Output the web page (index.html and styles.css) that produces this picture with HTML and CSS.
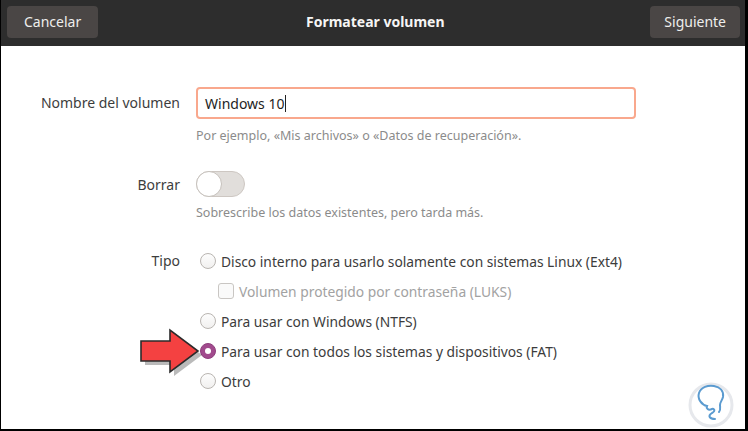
FILE: index.html
```html
<!DOCTYPE html>
<html lang="es">
<head>
<meta charset="utf-8">
<title>Formatear volumen</title>
<link rel="stylesheet" href="styles.css">
</head>
<body>
<div class="frame">
  <header class="headerbar">
    <button class="hbtn">Cancelar</button>
    <div class="title">Formatear volumen</div>
    <button class="hbtn next">Siguiente</button>
  </header>
  <main class="content">
    <div class="form">
      <div class="label l-name">Nombre del volumen</div>
      <div class="field">
        <div class="entry"><span>Windows 10</span><span class="caret"></span></div>
        <div class="hint hint-name">Por ejemplo, «Mis archivos» o «Datos de recuperación».</div>
      </div>

      <div class="label l-erase">Borrar</div>
      <div class="field field-erase">
        <div class="switch"><span class="knob"></span></div>
        <div class="hint hint-erase">Sobrescribe los datos existentes, pero tarda más.</div>
      </div>

      <div class="label l-type">Tipo</div>
      <div class="field field-type">
        <div class="opt"><span class="radio"></span><span>Disco interno para usarlo solamente con sistemas Linux (Ext4)</span></div>
        <div class="opt sub disabled"><span class="check"></span><span>Volumen protegido por contraseña (LUKS)</span></div>
        <div class="opt"><span class="radio"></span><span>Para usar con Windows (NTFS)</span></div>
        <div class="opt selected-row">
          <svg class="arrow" width="66" height="48" viewBox="0 0 66 48">
            <path d="M5 15 H34 V4 L62 25 L34 46 V35 H5 Z" fill="#3a3a3a" opacity="0.35" transform="translate(2,2)"/>
            <path d="M3 13 H32 V2 L60 23 L32 44 V33 H3 Z" fill="#f44141" stroke="#2b2b2b" stroke-width="1.6" stroke-linejoin="miter"/>
          </svg>
          <span class="radio on"></span><span>Para usar con todos los sistemas y dispositivos (FAT)</span></div>
        <div class="opt"><span class="radio"></span><span>Otro</span></div>
      </div>
    </div>
    <svg class="logo" width="46" height="54" viewBox="0 0 46 54">
      <circle cx="23" cy="30" r="21" fill="#fff" stroke="#e6e8ec" stroke-width="3"/>
      <path d="M27 44 C22 44 19 41 24 38 C28 36 26 33 24 34 C20 36 18 33 19 31 C14 30 9 24 11 18 C13 12 20 10 26 11 C32 12 36 16 35 22 C34 26 32 27 32 30 C32 32 33 35 31 37" fill="none" stroke="#5b9bd0" stroke-width="2" stroke-linecap="round"/>
    </svg>
  </main>
</div>
</body>
</html>
```
FILE: styles.css
```css
* { box-sizing: border-box; }
html, body { margin: 0; padding: 0; }
body {
  width: 748px;
  height: 431px;
  font-family: "Noto Sans", "DejaVu Sans", sans-serif;
  background: #000;
  overflow: hidden;
}
.frame {
  width: 748px;
  height: 431px;
  border-left: 1px solid #000;
  border-right: 3px solid #000;
  border-bottom: 2px solid #000;
  background: #fff;
  display: flex;
  flex-direction: column;
}
.headerbar {
  height: 46px;
  background: #2d2d2d;
  display: flex;
  align-items: center;
  justify-content: space-between;
  padding: 0 5px 3px 6px;
}
.hbtn {
  height: 32px;
  border: none;
  border-radius: 4px;
  background: #4a4645;
  color: #eeeeec;
  font-family: inherit;
  font-size: 14px;
  padding: 0 17px;
}
.hbtn.next { padding: 0 14px; }
.title {
  color: #f6f5f4;
  font-weight: bold;
  font-size: 14px;
  margin-left: 2px;
}
.content {
  flex: 1;
  position: relative;
  padding-top: 41px;
}
.form {
  display: grid;
  grid-template-columns: 179px 1fr;
  column-gap: 16px;
  align-items: start;
}
.label {
  text-align: right;
  color: #3d3d3d;
  font-size: 14px;
  line-height: 20px;
}
.l-name { margin-top: 6px; }
.l-erase { margin-top: 30px; }
.l-type { margin-top: 29px; }
.field { display: flex; flex-direction: column; align-items: flex-start; }
.entry {
  width: 440px;
  height: 32px;
  border: 2px solid #f9a88d;
  border-radius: 4px;
  display: flex;
  align-items: center;
  padding-left: 7px;
  font-size: 14px;
  color: #1e1e1e;
}
.caret {
  display: inline-block;
  width: 1px;
  height: 17px;
  background: #222;
  margin-left: 1px;
}
.hint {
  color: #8b8b8b;
  font-size: 12.5px;
  line-height: 18px;
}
.hint-name { margin-top: 8px; }
.field-erase { margin-top: 26px; }
.switch {
  width: 49px;
  height: 26px;
  border-radius: 13px;
  background: #e1dedb;
  border: 1px solid #cdc7c2;
  position: relative;
}
.knob {
  position: absolute;
  left: -1px;
  top: -1px;
  width: 26px;
  height: 26px;
  border-radius: 50%;
  background: #fff;
  border: 1px solid #c6c1bc;
}
.hint-erase { margin-top: 7px; }
.field-type { margin-top: 29px; }
.opt {
  height: 20px;
  display: flex;
  align-items: center;
  gap: 5px;
  color: #3c3c3c;
  font-size: 13.8px;
  padding-left: 4px;
  position: relative;
}
.opt + .opt { margin-top: 10px; }
.opt.sub { padding-left: 22px; }
.opt.disabled { color: #a2a2a2; }
.radio {
  width: 16px;
  height: 16px;
  border-radius: 50%;
  border: 1px solid #b9b5b1;
  background: linear-gradient(#fdfdfd, #f1f0ef);
  flex: none;
  display: flex;
  align-items: center;
  justify-content: center;
}
.radio.on {
  background: #a14a8d;
  border-color: #8f3f7d;
}
.radio.on::after {
  content: "";
  width: 6px;
  height: 6px;
  border-radius: 50%;
  background: #fff;
}
.check {
  width: 16px;
  height: 16px;
  border-radius: 3px;
  border: 1px solid #c9c6c3;
  background: #fafafa;
  flex: none;
}
.arrow {
  position: absolute;
  left: -58px;
  top: -13px;
}
.logo {
  position: absolute;
  right: 11px;
  bottom: 0px;
}
```
